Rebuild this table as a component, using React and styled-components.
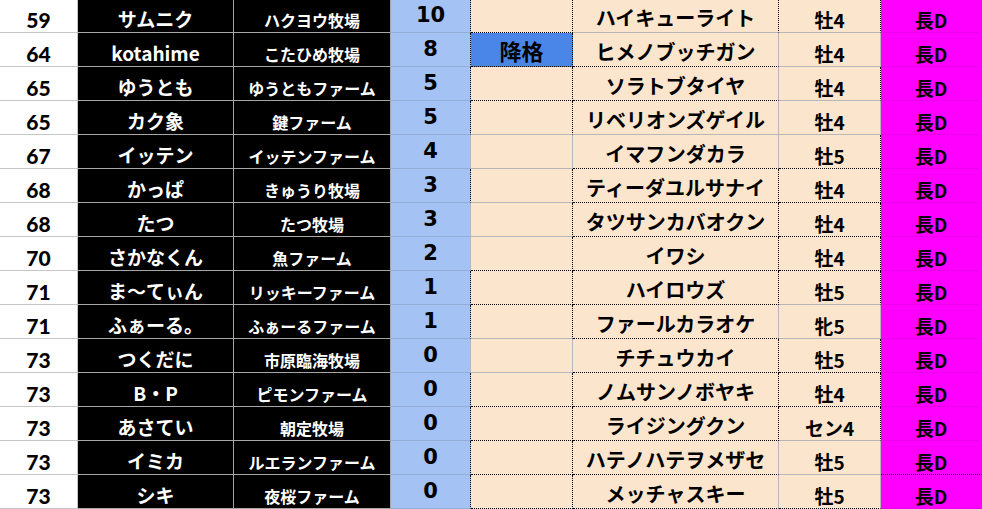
import React from 'react';
import styled, { createGlobalStyle } from 'styled-components';

const GlobalStyle = createGlobalStyle`
  html, body {
    margin: 0;
    padding: 0;
    overflow: hidden;
    background: #fff;
  }
`;

const JP = '"Noto Sans CJK JP", "Noto Sans", sans-serif';

const lines = {
  d: '1px dotted #000',
  s: '1px solid #b7b7b7',
  f: '1px solid #ea00ea',
  b: '1px solid #93acd8',
  g: '1px solid #c6c6c6',
  k: '1px solid #a6a6a6',
  n: '1px solid transparent',
};

// [rank, owner, farm, points, note, horse, sex]
const rows = [
  [59, 'サムニク', 'ハクヨウ牧場', 10, '', 'ハイキューライト', '牡4'],
  [64, 'kotahime', 'こたひめ牧場', 8, '降格', 'ヒメノブッチガン', '牡4'],
  [65, 'ゆうとも', 'ゆうともファーム', 5, '', 'ソラトブタイヤ', '牡4'],
  [65, 'カク象', '鍵ファーム', 5, '', 'リベリオンズゲイル', '牡4'],
  [67, 'イッテン', 'イッテンファーム', 4, '', 'イマフンダカラ', '牡5'],
  [68, 'かっぱ', 'きゅうり牧場', 3, '', 'ティーダユルサナイ', '牡4'],
  [68, 'たつ', 'たつ牧場', 3, '', 'タツサンカバオクン', '牡4'],
  [70, 'さかなくん', '魚ファーム', 2, '', 'イワシ', '牡4'],
  [71, 'ま〜てぃん', 'リッキーファーム', 1, '', 'ハイロウズ', '牡5'],
  [71, 'ふぁーる。', 'ふぁーるファーム', 1, '', 'ファールカラオケ', '牝5'],
  [73, 'つくだに', '市原臨海牧場', 0, '', 'チチュウカイ', '牡5'],
  [73, 'B・P', 'ピモンファーム', 0, '', 'ノムサンノボヤキ', '牡4'],
  [73, 'あさてい', '朝定牧場', 0, '', 'ライジングクン', 'セン4'],
  [73, 'イミカ', 'ルエランファーム', 0, '', 'ハテノハテヲメザセ', '牡5'],
  [73, 'シキ', '夜桜ファーム', 0, '', 'メッチャスキー', '牡5'],
];

// border styles per row, copied off the sheet
const rightPoint = 'ddddsdssddsdddd';
const rightNote = 'ddddsdddddsdddd';
const rightHorse = 'dssssddddsdddss';
const rightSex = 'dsdsdddddsdddss';
const bottomNote = 'dddssssddssdddd';
const bottomHorse = 'sddsddddddddddd';
const bottomSex = 'ssssddddssddssd';
const bottomType = 'fffffffffffffdf';

const Sheet = styled.div`
  display: grid;
  grid-template-columns: 78px 156px 157px 80px 102px 206px 102px 101px;
  grid-auto-rows: 34px;
  width: 982px;
  margin-top: -1px;
`;

const Cell = styled.div`
  box-sizing: border-box;
  display: flex;
  align-items: center;
  justify-content: center;
  white-space: nowrap;
  overflow: hidden;
  font-weight: 700;
  line-height: 1;
  border-right: ${(p) => lines[p.$right || 'n']};
  border-bottom: ${(p) => lines[p.$bottom || 'n']};
`;

const RankCell = styled(Cell)`
  background: #fff;
  color: #000;
  font-family: Lato, "Noto Sans", sans-serif;
  font-weight: 900;
  font-size: 21px;
  padding-top: 7px;
`;

const OwnerCell = styled(Cell)`
  background: #000;
  color: #fff;
  font-family: ${JP};
  font-size: 19px;
  padding-top: 6px;
`;

const FarmCell = styled(Cell)`
  background: #000;
  color: #fff;
  font-family: ${JP};
  font-size: 16px;
  padding-top: 8px;
`;

const PointCell = styled(Cell)`
  background: #a4c2f4;
  color: #000;
  font-family: "DejaVu Sans", sans-serif;
  font-size: 21px;
  padding-top: 0;
`;

const NoteCell = styled(Cell)`
  background: ${(p) => (p.$demoted ? '#4a86e8' : '#fce5cd')};
  color: #000;
  font-family: ${JP};
  font-size: 22px;
  padding-top: 0;
`;

const HorseCell = styled(Cell)`
  background: #fce5cd;
  color: #000;
  font-family: ${JP};
  font-size: 20px;
  padding-top: 4px;
`;

const SexCell = styled(Cell)`
  background: #fce5cd;
  color: #000;
  font-family: ${JP};
  font-size: 19px;
  padding-top: 7px;
`;

const TypeCell = styled(Cell)`
  background: #ff00ff;
  color: #000;
  font-family: ${JP};
  font-size: 19px;
  padding-top: 7px;
`;

function SheetRow({ row, i }) {
  const [rank, owner, farm, points, note, horse, sex] = row;
  return (
    <>
      <RankCell $right="g" $bottom="g">{rank}</RankCell>
      <OwnerCell $right="k" $bottom="k">{owner}</OwnerCell>
      <FarmCell $right="k" $bottom="k">{farm}</FarmCell>
      <PointCell $right={rightPoint[i]} $bottom="b">{points}</PointCell>
      <NoteCell $demoted={!!note} $right={rightNote[i]} $bottom={bottomNote[i]}>
        {note}
      </NoteCell>
      <HorseCell $right={rightHorse[i]} $bottom={bottomHorse[i]}>{horse}</HorseCell>
      <SexCell $right={rightSex[i]} $bottom={bottomSex[i]}>{sex}</SexCell>
      <TypeCell $bottom={bottomType[i]}>長D</TypeCell>
    </>
  );
}

export default function App() {
  return (
    <>
      <GlobalStyle />
      <Sheet>
        {rows.map((row, i) => (
          <SheetRow key={`row-${i}`} row={row} i={i} />
        ))}
      </Sheet>
    </>
  );
}
